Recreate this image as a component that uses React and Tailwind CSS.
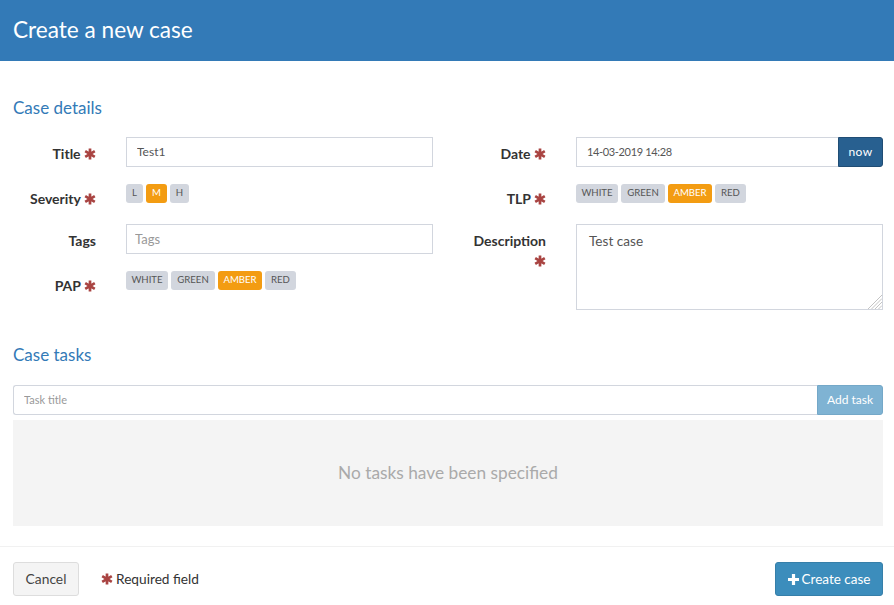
import React from "react";

const Req = () => (
  <svg viewBox="0 0 12 12" className="inline-block w-[12px] h-[12px] text-[#a94442] align-[-0.5px]" fill="none" stroke="currentColor" strokeWidth="2.7">
    <path d="M6 .5V11.5M1.2 3.2 10.8 8.8M10.8 3.2 1.2 8.8" />
    <circle cx="6" cy="6" r="2.2" fill="currentColor" stroke="none" />
  </svg>
);

const Plus = () => (
  <svg viewBox="0 0 11 11" className="w-[11px] h-[11px]" fill="none" stroke="currentColor" strokeWidth="3.2">
    <path d="M5.5 0V11M0 5.5H11" />
  </svg>
);

function Label({ text, req = true }) {
  return (
    <label className="w-[113px] shrink-0 pt-[7px] pr-[30px] text-right text-[14px] leading-[20px] font-bold text-[#333]">
      {text}
      {req && <> <Req /></>}
    </label>
  );
}

function Pills({ items, active }) {
  return (
    <div className="flex gap-[3px] mt-[2px] h-[19px]">
      {items.map(([t, w]) => (
        <span
          key={t}
          className={`flex items-center justify-center h-[19px] ${w} rounded-[3px] text-[9.6px] ${
            t === active ? "bg-[#f39c12] text-white" : "bg-[#d2d6de] text-[#555]"
          }`}
        >
          {t}
        </span>
      ))}
    </div>
  );
}

const inputCls = "block w-full h-[30px] bg-white border border-[#d2d6de] outline-none";

export default function App() {
  const tl = [["WHITE", "w-[42px]"], ["GREEN", "w-[44px]"], ["AMBER", "w-[44px]"], ["RED", "w-[31px]"]];
  const sev = [["L", "w-[17px]"], ["M", "w-[21px]"], ["H", "w-[19px]"]];
  return (
    <div className="w-[894px] h-[605px] bg-white text-[#333] font-['Lato','Noto_Sans',sans-serif] overflow-hidden flex flex-col">
      <header className="h-[61px] bg-[#337ab7] flex items-center px-[13px] pb-[2px] text-white text-[22.6px] shrink-0">
        Create a new case
      </header>

      <main className="pl-[13px] pr-[11px] h-[486px] shrink-0 border-b border-[#f1f1f1]">
        <h4 className="mt-[36px] h-[22px] leading-[22px] text-[17px] text-[#337ab7]">Case details</h4>

        <div className="grid grid-cols-[420px_420px] gap-x-[30px] mt-[18px]">
          <div className="flex flex-col gap-[15px]">
            <div className="flex">
              <Label text="Title" />
              <input readOnly value="Test1" className={`${inputCls} px-[10px] pb-[2px] text-[12px] text-[#555]`} />
            </div>
            <div className="flex h-[27px]">
              <Label text="Severity" />
              <Pills items={sev} active="M" />
            </div>
            <div className="flex">
              <Label text="Tags" req={false} />
              <input placeholder="Tags" className={`${inputCls} border-[#ccc] px-[8px] pb-[1px] text-[13px] placeholder:text-[#999]`} />
            </div>
            <div className="flex h-[27px]">
              <Label text="PAP" />
              <Pills items={tl} active="AMBER" />
            </div>
          </div>

          <div className="flex flex-col gap-[15px]">
            <div className="flex">
              <Label text="Date" />
              <div className="flex w-full">
                <input readOnly value="14-03-2019 14:28" className={`${inputCls} border-r-0 px-[10px] pb-[1px] text-[11px] tracking-[-0.35px] text-[#555]`} />
                <button className="w-[45px] h-[30px] shrink-0 bg-[#286090] border border-[#204d74] rounded-r-[3px] text-white text-[12px] tracking-[0.4px]">now</button>
              </div>
            </div>
            <div className="flex h-[27px]">
              <Label text="TLP" />
              <Pills items={tl} active="AMBER" />
            </div>
            <div className="flex">
              <Label text="Description" />
              <div className="relative w-full h-[86px]">
                <textarea readOnly value="Test case" className="block w-full h-[86px] resize-none bg-white border border-[#d2d6de] outline-none px-[12px] py-[6px] text-[13.6px] leading-[20px] text-[#555]" />
                <svg viewBox="0 0 14 14" className="absolute right-px bottom-px w-[14px] h-[14px]" stroke="#c4c4c4" strokeWidth="1" fill="none">
                  <path d="M0 14 14 0M3.5 14 14 3.5M7 14 14 7M10.5 14 14 10.5" />
                </svg>
              </div>
            </div>
          </div>
        </div>

        <h4 className="mt-[34px] h-[22px] leading-[22px] text-[17px] text-[#337ab7]">Case tasks</h4>

        <div className="flex mt-[19px] h-[30px]">
          <input placeholder="Task title" className="flex-1 min-w-0 h-[30px] border border-[#d2d6de] border-r-0 rounded-l-[3px] px-[10px] pb-[2px] text-[11px] outline-none placeholder:text-[#999]" />
          <button className="w-[66px] h-[30px] shrink-0 bg-[#7fb3d3] border border-[#74a8c8] rounded-r-[3px] text-white text-[12px]">Add task</button>
        </div>

        <div className="mt-[5px] h-[106px] bg-[#f4f4f4] flex items-center justify-center text-[17.3px] pb-[1px] text-[#aaa]">
          No tasks have been specified
        </div>
      </main>

      <footer className="flex items-center justify-between pl-[13px] pr-[11px] pt-[15px]">
        <div className="flex items-center">
          <button className="w-[66px] h-[34px] bg-[#f4f4f4] border border-[#ddd] rounded-[3px] text-[13.8px] text-[#444]">Cancel</button>
          <span className="ml-[22px] text-[13.7px] text-[#333] flex items-center gap-[3px]">
            <Req /> Required field
          </span>
        </div>
        <button className="w-[108px] h-[34px] bg-[#3c8dbc] border border-[#367fa9] rounded-[3px] text-white text-[13.5px] flex items-center justify-center gap-[3px]">
          <Plus /> Create case
        </button>
      </footer>
    </div>
  );
}
